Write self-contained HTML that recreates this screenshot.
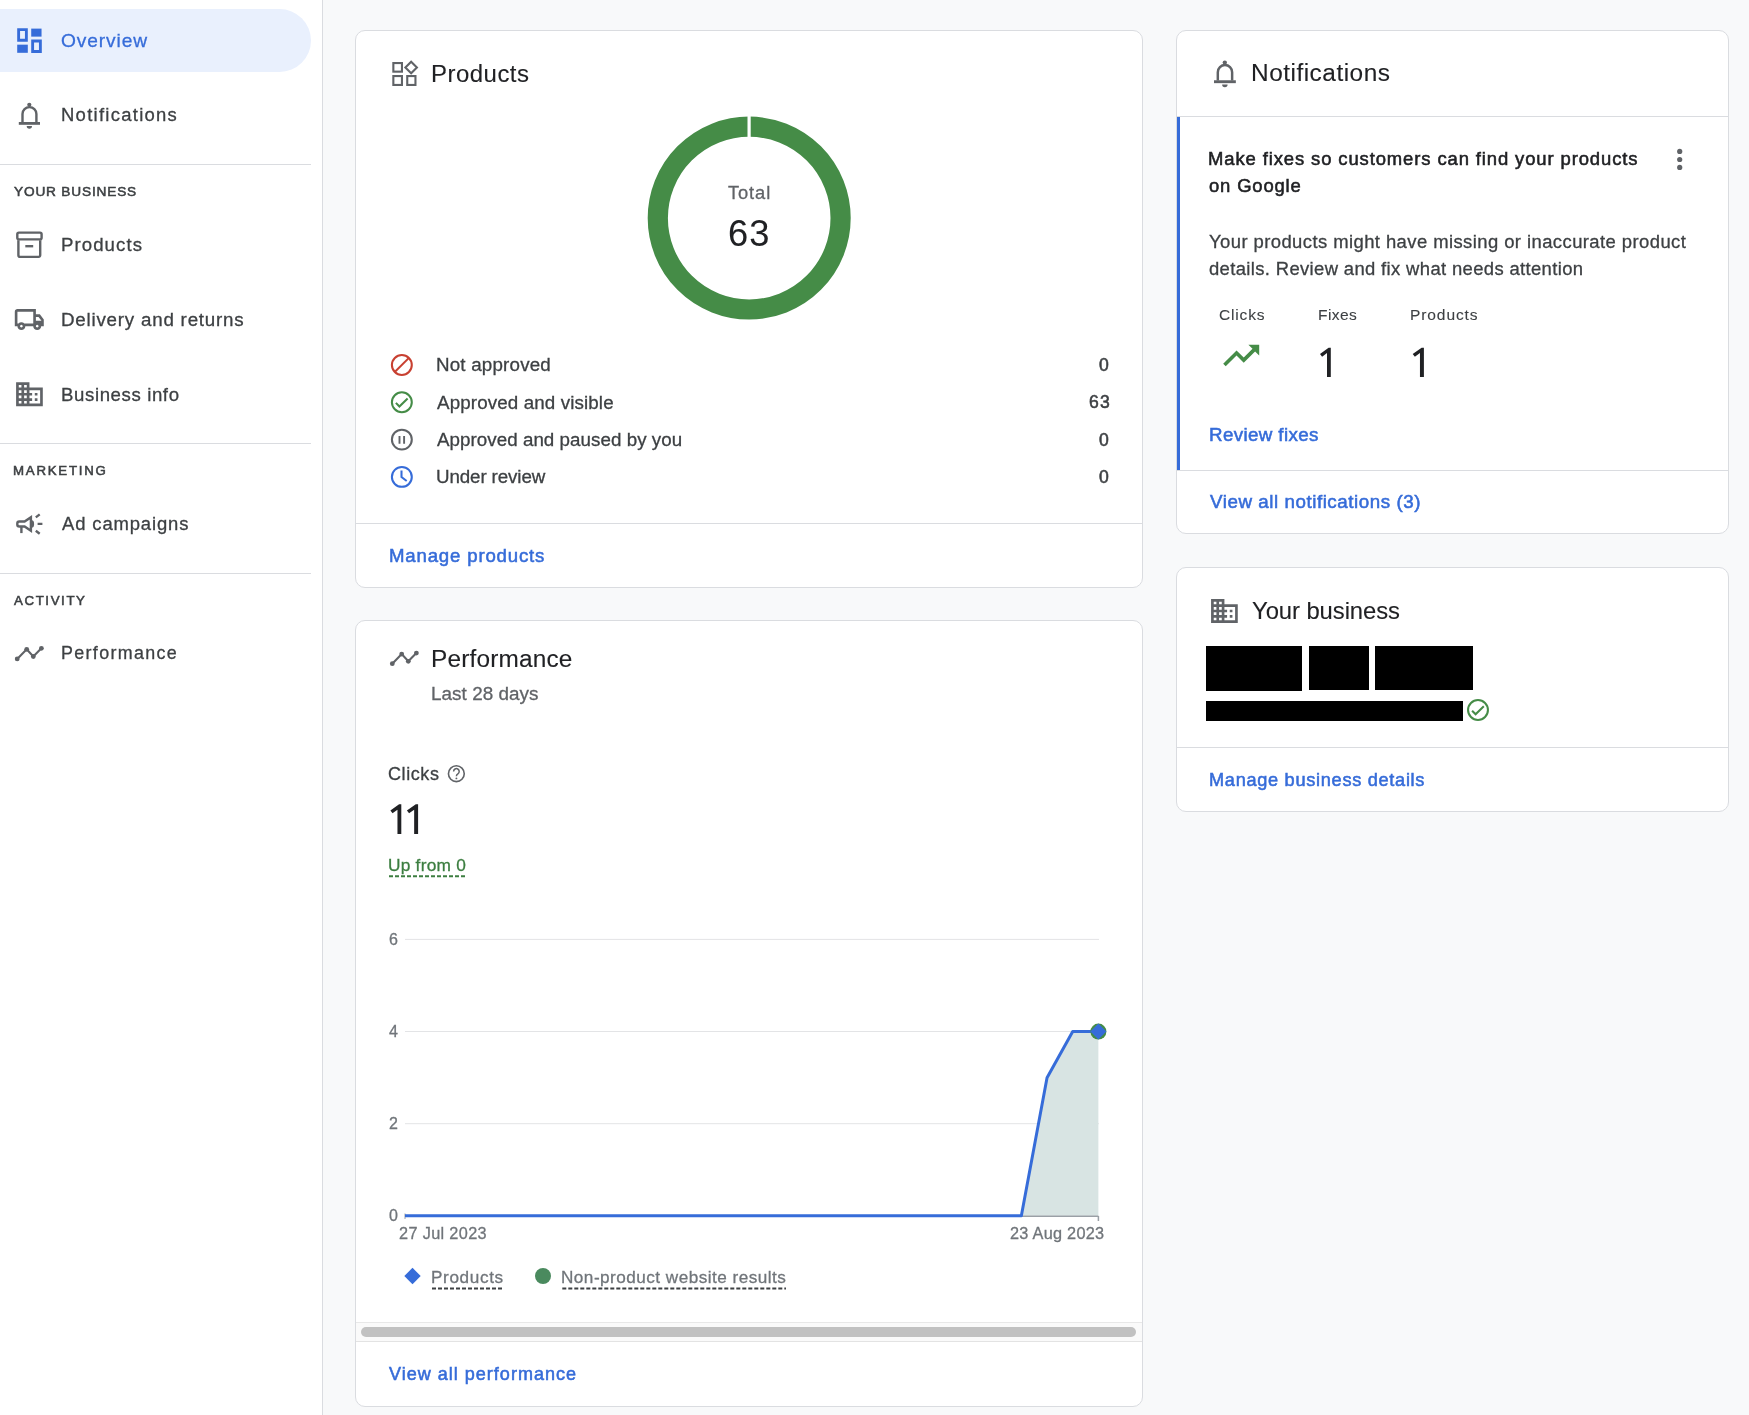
<!DOCTYPE html><html><head><meta charset="utf-8"><style>
html,body{margin:0;padding:0;}
body{width:1749px;height:1415px;overflow:hidden;background:#f8f9fa;position:relative;font-family:"Liberation Sans",sans-serif;}
.t{position:absolute;white-space:nowrap;will-change:transform;}
.abs{position:absolute;}
.card{position:absolute;background:#fff;border:1px solid #dadce0;border-radius:10px;box-sizing:border-box;}
.hr{position:absolute;height:1px;background:#dadce0;}
svg{position:absolute;left:0;top:0;overflow:visible;}
</style></head><body>

<div class="abs" style="left:0;top:0;width:322px;height:1415px;background:#fff;border-right:1px solid #dadce0;"></div>
<div class="abs" style="left:0;top:9px;width:311px;height:63px;background:#e9f0fd;border-radius:0 32px 32px 0;"></div>
<div class="hr" style="left:0;top:164px;width:311px;"></div>
<div class="hr" style="left:0;top:443px;width:311px;"></div>
<div class="hr" style="left:0;top:573px;width:311px;"></div>
<div class="card" style="left:355px;top:30px;width:788px;height:558px;"></div>
<div class="card" style="left:355px;top:620px;width:788px;height:787px;"></div>
<div class="card" style="left:1176px;top:30px;width:553px;height:504px;"></div>
<div class="card" style="left:1176px;top:567px;width:553px;height:245px;"></div>
<div class="hr" style="left:356px;top:523px;width:786px;"></div>
<div class="hr" style="left:1177px;top:116px;width:551px;"></div>
<div class="hr" style="left:1177px;top:470px;width:551px;"></div>
<div class="hr" style="left:1177px;top:747px;width:551px;"></div>
<div class="abs" style="left:1177px;top:117px;width:3px;height:353px;background:#366cd9;"></div>
<div class="abs" style="left:356px;top:1322px;width:786px;height:20px;background:#fafafa;border-top:1px solid #e8e8e8;border-bottom:1px solid #e3e3e3;box-sizing:border-box;"></div>
<div class="abs" style="left:361px;top:1327px;width:775px;height:10px;background:#c1c1c1;border-radius:5px;"></div>
<svg width="1749" height="1415" viewBox="0 0 1749 1415"><g transform="translate(17.2,28.2) scale(1.36)" fill="#366cd9"><path fill-rule="evenodd" d="M0 0h7.8v9.9H0z M2.1 2.1v5.7h3.6V2.1z"/><path d="M10.3 0.3h7.6v5.9h-7.6z"/><path d="M0 12.1h7.8v6H0z"/><path fill-rule="evenodd" d="M10.3 8.4h7.8v9.8h-7.8z M12.4 10.5v5.6h3.6v-5.6z"/></g><g transform="translate(18.8,103) scale(1.0)" fill="#606367" stroke="none"><circle cx="10.5" cy="1.8" r="2.1"/><path d="M2.5 19.2V11.1A8.15 8.15 0 0 1 18.8 11.1V19.2h-2.4V11.1A5.75 5.75 0 0 0 4.9 11.1V19.2z"/><rect x="0" y="19" width="21.2" height="2.8"/><path d="M7.9 23.1h5.3a2.65 2.65 0 0 1-5.3 0z"/></g><g transform="translate(1214,60.7) scale(1.03)" fill="#606367" stroke="none"><circle cx="10.5" cy="1.8" r="2.1"/><path d="M2.5 19.2V11.1A8.15 8.15 0 0 1 18.8 11.1V19.2h-2.4V11.1A5.75 5.75 0 0 0 4.9 11.1V19.2z"/><rect x="0" y="19" width="21.2" height="2.8"/><path d="M7.9 23.1h5.3a2.65 2.65 0 0 1-5.3 0z"/></g><g fill="none" stroke="#606367" stroke-width="2.4"><rect x="17.3" y="232.6" width="24.3" height="6.8" rx="1.6"/><path d="M18.4 240.2V255.3a1.6 1.6 0 0 0 1.6 1.6H38.6a1.6 1.6 0 0 0 1.6-1.6V240.2"/><path d="M25.3 246.2h7.9"/></g><g transform="translate(13.48,309) scale(0.03295) translate(0,800)" fill="#606367"><path d="M240-160q-50 0-85-35t-35-85H40v-440q0-33 23.5-56.5T120-800h560v160h120l120 160v200h-80q0 50-35 85t-85 35q-50 0-85-35t-35-85H360q0 50-35 85t-85 35Zm0-80q17 0 28.5-11.5T280-280q0-17-11.5-28.5T240-320q-17 0-28.5 11.5T200-280q0 17 11.5 28.5T240-240ZM120-360h32q17-18 39-29t49-11q27 0 49 11t39 29h272v-360H120v360Zm600 120q17 0 28.5-11.5T760-280q0-17-11.5-28.5T720-320q-17 0-28.5 11.5T680-280q0 17 11.5 28.5T720-240Zm-40-200h170l-90-120h-80v120ZM360-540Z"/></g><g transform="translate(13.43,378.2) scale(1.335)" fill="#606367"><path d="M12 7V3H2v18h20V7H12zM6 19H4v-2h2v2zm0-4H4v-2h2v2zm0-4H4V9h2v2zm0-4H4V5h2v2zm4 12H8v-2h2v2zm0-4H8v-2h2v2zm0-4H8V9h2v2zm0-4H8V5h2v2zm10 12h-8v-2h2v-2h-2v-2h2v-2h-2V9h8v10zm-2-8h-2v2h2v-2zm0 4h-2v2h2v-2z"/></g><g transform="translate(1208.4,595) scale(1.335)" fill="#606367"><path d="M12 7V3H2v18h20V7H12zM6 19H4v-2h2v2zm0-4H4v-2h2v2zm0-4H4V9h2v2zm0-4H4V5h2v2zm4 12H8v-2h2v2zm0-4H8v-2h2v2zm0-4H8V9h2v2zm0-4H8V5h2v2zm10 12h-8v-2h2v-2h-2v-2h2v-2h-2V9h8v10zm-2-8h-2v2h2v-2zm0 4h-2v2h2v-2z"/></g><g fill="none" stroke="#606367" stroke-width="2.4"><path d="M24.6 521.5H19.3a2.0 2.0 0 0 0-2.0 2.0v1.0a2.0 2.0 0 0 0 2.0 2.0H24.6l6.3 4.3V517.2z" stroke-linejoin="miter"/><path d="M21.4 527v6.1"/><path d="M35.8 517.4l3.9-3.0M37.6 523.9h4.8M35.8 530.7l3.9 3.0"/></g><path d="M31.9 520.3a2.2 3.65 0 0 1 0 7.3z" fill="#606367"/><g><path d="M17.2,658.9 L26.7,649.3 L33.3,656.5 L41.4,648.3" fill="none" stroke="#606367" stroke-width="2.1"/><circle cx="17.2" cy="658.9" r="2.4" fill="#606367"/><circle cx="26.7" cy="649.3" r="2.4" fill="#606367"/><circle cx="33.3" cy="656.5" r="2.4" fill="#606367"/><circle cx="41.4" cy="648.3" r="2.4" fill="#606367"/></g><g><path d="M392.3,663.7 L401.7,654.1 L408.3,661.3 L416.4,653.1" fill="none" stroke="#606367" stroke-width="2.1"/><circle cx="392.3" cy="663.7" r="2.4" fill="#606367"/><circle cx="401.7" cy="654.1" r="2.4" fill="#606367"/><circle cx="408.3" cy="661.3" r="2.4" fill="#606367"/><circle cx="416.4" cy="653.1" r="2.4" fill="#606367"/></g><g fill="none" stroke="#606367" stroke-width="2.1"><rect x="393.35" y="63.05" width="8.6" height="8.6"/><rect x="393.35" y="76.05" width="8.6" height="8.9"/><rect x="407.25" y="76.05" width="8.2" height="8.9"/><path d="M411.15 61.8L416.9 67.5L411.15 73.2L405.4 67.5z"/></g><circle cx="749.2" cy="218.1" r="91.4" fill="none" stroke="#458c47" stroke-width="20.200000000000003"/><rect x="747.5" y="115.6" width="3.2" height="22.200000000000003" fill="#fff"/><circle cx="401.85" cy="364.95" r="9.95" fill="none" stroke="#c84031" stroke-width="2.05"/><path d="M395.0 371.8L408.7 358.1" stroke="#c84031" stroke-width="2.05"/><circle cx="401.85" cy="402.2" r="9.95" fill="none" stroke="#458c47" stroke-width="2.05"/><path d="M395.9 402.9L399.4 406.5L407.6 398.4" fill="none" stroke="#458c47" stroke-width="2.05"/><circle cx="401.85" cy="439.6" r="9.95" fill="none" stroke="#606367" stroke-width="2.05"/><path d="M399.5 436v7.7M404.1 436v7.7" stroke="#606367" stroke-width="1.9"/><circle cx="401.85" cy="476.9" r="9.95" fill="none" stroke="#366cd9" stroke-width="2.05"/><path d="M401.5 470.5v6.6l5.2 3.9" fill="none" stroke="#366cd9" stroke-width="2.05"/><circle cx="456.35" cy="773.7" r="7.9" fill="none" stroke="#606367" stroke-width="1.6"/><path d="M453.6 771.4a2.8 2.8 0 1 1 4.3 2.4c-1.1.7-1.5 1.2-1.5 2.4" fill="none" stroke="#606367" stroke-width="1.5"/><circle cx="456.4" cy="778.4" r="0.95" fill="#606367"/><path d="M389 876.3H467" stroke="#3c7e40" stroke-width="2" stroke-dasharray="4 2"/><path d="M405 939.4H1099" stroke="#e3e4e6" stroke-width="1"/><path d="M405 1031.5H1099" stroke="#e3e4e6" stroke-width="1"/><path d="M405 1123.7H1099" stroke="#e3e4e6" stroke-width="1"/><path d="M1021.3555555555556,1215.8 L1047.037037037037,1077.65 L1072.7185185185185,1031.6 L1098.4,1031.6 L1098.4,1215.8z" fill="#d8e4e3"/><path d="M405 1216.3H1098.4 M1098.4 1216V1221" stroke="#9aa0a6" stroke-width="1.5" fill="none"/><path d="M405 1213.5V1219" stroke="#9aa0a6" stroke-width="1" fill="none"/><path d="M405,1215.8 L1021.3555555555556,1215.8 L1047.037037037037,1077.65 L1072.7185185185185,1031.6 L1098.4,1031.6" fill="none" stroke="#366cd9" stroke-width="3" stroke-linejoin="round"/><circle cx="1098.4" cy="1031.6" r="8" fill="#458c47"/><path d="M1098.4 1023.5999999999999l8 8l-8 8l-8-8z" fill="#366cd9"/><path d="M412.5 1267.8l8.2 8.2l-8.2 8.2l-8.2-8.2z" fill="#366cd9"/><circle cx="543" cy="1276" r="8" fill="#4a8a5e"/><path d="M432 1288.4H503" stroke="#3d4043" stroke-width="2" stroke-dasharray="4 2"/><path d="M562.3 1288.4H786" stroke="#3d4043" stroke-width="2" stroke-dasharray="4 2"/><circle cx="1679.7" cy="151.4" r="2.6" fill="#606367"/><circle cx="1679.7" cy="159.5" r="2.6" fill="#606367"/><circle cx="1679.7" cy="167.4" r="2.6" fill="#606367"/><g transform="translate(1219.6,333.9) scale(1.8)" fill="#458c47"><path d="M16 6l2.29 2.29-4.88 4.88-4-4L2 16.59 3.41 18l6-6 4 4 6.3-6.29L22 12V6z"/></g><g transform="translate(1320.0,347.8) scale(1.0000,1.0000)" fill="#202124"><path d="M10.8 0L8.6 0L0 6.1L2.1 8.9L7.0 5.3V29.1H10.8Z"/></g><g transform="translate(1412.7,347.8) scale(1.0370,1.0000)" fill="#202124"><path d="M10.8 0L8.6 0L0 6.1L2.1 8.9L7.0 5.3V29.1H10.8Z"/></g><g transform="translate(390.4,804.2) scale(1.0093,1.0275)" fill="#202124"><path d="M10.8 0L8.6 0L0 6.1L2.1 8.9L7.0 5.3V29.1H10.8Z"/></g><g transform="translate(406.9,804.2) scale(1.0370,1.0275)" fill="#202124"><path d="M10.8 0L8.6 0L0 6.1L2.1 8.9L7.0 5.3V29.1H10.8Z"/></g><rect x="1206" y="646" width="96" height="45" fill="#000"/><rect x="1309" y="646" width="60" height="44" fill="#000"/><rect x="1375" y="646" width="98" height="44" fill="#000"/><rect x="1206" y="701" width="257" height="20" fill="#000"/><circle cx="1478" cy="710" r="9.95" fill="none" stroke="#458c47" stroke-width="2.05"/><path d="M1472.1 710.7L1475.6 714.3L1483.8 706.2" fill="none" stroke="#458c47" stroke-width="2.05"/></svg>
<div class="t" style="left:61.3px;top:31px;font-size:19.186px;line-height:19.186px;letter-spacing:0.886px;color:#366cd9;-webkit-text-stroke:0.3px #366cd9;">Overview</div>
<div class="t" style="left:61.3px;top:106px;font-size:18.46px;line-height:18.46px;letter-spacing:1.283px;color:#3d4043;-webkit-text-stroke:0.3px #3d4043;">Notifications</div>
<div class="t" style="left:13.7px;top:185px;font-size:13.67px;line-height:13.67px;letter-spacing:0.825px;color:#3d4043;-webkit-text-stroke:0.55px #3d4043;">YOUR BUSINESS</div>
<div class="t" style="left:61.4px;top:236px;font-size:18.605px;line-height:18.605px;letter-spacing:1.086px;color:#3d4043;-webkit-text-stroke:0.3px #3d4043;">Products</div>
<div class="t" style="left:61.4px;top:311px;font-size:18.75px;line-height:18.75px;letter-spacing:0.784px;color:#3d4043;-webkit-text-stroke:0.3px #3d4043;">Delivery and returns</div>
<div class="t" style="left:61.4px;top:386px;font-size:18.605px;line-height:18.605px;letter-spacing:0.617px;color:#3d4043;-webkit-text-stroke:0.3px #3d4043;">Business info</div>
<div class="t" style="left:12.7px;top:464px;font-size:13.256px;line-height:13.256px;letter-spacing:1.762px;color:#3d4043;-webkit-text-stroke:0.55px #3d4043;">MARKETING</div>
<div class="t" style="left:62.4px;top:515px;font-size:18.46px;line-height:18.46px;letter-spacing:0.873px;color:#3d4043;-webkit-text-stroke:0.3px #3d4043;">Ad campaigns</div>
<div class="t" style="left:13.7px;top:594px;font-size:13.256px;line-height:13.256px;letter-spacing:1.614px;color:#3d4043;-webkit-text-stroke:0.55px #3d4043;">ACTIVITY</div>
<div class="t" style="left:61.4px;top:645px;font-size:17.878px;line-height:17.878px;letter-spacing:1.35px;color:#3d4043;-webkit-text-stroke:0.3px #3d4043;">Performance</div>
<div class="t" style="left:430.8px;top:62px;font-size:23.983px;line-height:23.983px;letter-spacing:0.486px;color:#202124;-webkit-text-stroke:0.1px #202124;">Products</div>
<div class="t" style="left:728.4px;top:184px;font-size:18.314px;line-height:18.314px;letter-spacing:0.9px;color:#606367;-webkit-text-stroke:0.3px #606367;">Total</div>
<div class="t" style="left:728.0px;top:216px;font-size:36.286px;line-height:36.286px;letter-spacing:1.2px;color:#202124;-webkit-text-stroke:0.05px #202124;">63</div>
<div class="t" style="left:436.3px;top:356px;font-size:18.75px;line-height:18.75px;letter-spacing:0.2px;color:#3d4043;-webkit-text-stroke:0.3px #3d4043;">Not approved</div>
<div class="t" style="left:437.3px;top:394px;font-size:18.75px;line-height:18.75px;letter-spacing:0.132px;color:#3d4043;-webkit-text-stroke:0.3px #3d4043;">Approved and visible</div>
<div class="t" style="left:437.3px;top:431px;font-size:18.75px;line-height:18.75px;letter-spacing:0.048px;color:#3d4043;-webkit-text-stroke:0.3px #3d4043;">Approved and paused by you</div>
<div class="t" style="left:436.3px;top:468px;font-size:18.75px;line-height:18.75px;letter-spacing:-0.109px;color:#3d4043;-webkit-text-stroke:0.3px #3d4043;">Under review</div>
<div class="t" style="left:388.5px;top:547px;font-size:18.605px;line-height:18.605px;letter-spacing:0.836px;color:#366cd9;-webkit-text-stroke:0.55px #366cd9;">Manage products</div>
<div class="t" style="left:430.6px;top:647px;font-size:24.419px;line-height:24.419px;letter-spacing:0.16px;color:#202124;-webkit-text-stroke:0.1px #202124;">Performance</div>
<div class="t" style="left:431.2px;top:685px;font-size:18.896px;line-height:18.896px;letter-spacing:0.045px;color:#606367;-webkit-text-stroke:0.3px #606367;">Last 28 days</div>
<div class="t" style="left:388.4px;top:765px;font-size:18.024px;line-height:18.024px;letter-spacing:0.58px;color:#3d4043;-webkit-text-stroke:0.3px #3d4043;">Clicks</div>
<div class="t" style="left:388.1px;top:857px;font-size:17.297px;line-height:17.297px;letter-spacing:0.237px;color:#3c7e40;-webkit-text-stroke:0.3px #3c7e40;">Up from 0</div>
<div class="t" style="left:398.7px;top:1225px;font-size:16.279px;line-height:16.279px;letter-spacing:0.35px;color:#70757a;-webkit-text-stroke:0.3px #70757a;">27 Jul 2023</div>
<div class="t" style="left:1010.3px;top:1225px;font-size:16.279px;line-height:16.279px;letter-spacing:0.27px;color:#70757a;-webkit-text-stroke:0.3px #70757a;">23 Aug 2023</div>
<div class="t" style="left:431.0px;top:1269px;font-size:17.151px;line-height:17.151px;letter-spacing:0.643px;color:#70757a;-webkit-text-stroke:0.3px #70757a;">Products</div>
<div class="t" style="left:561.3px;top:1269px;font-size:17.151px;line-height:17.151px;letter-spacing:0.477px;color:#70757a;-webkit-text-stroke:0.3px #70757a;">Non-product website results</div>
<div class="t" style="left:389.2px;top:1365px;font-size:18.024px;line-height:18.024px;letter-spacing:1.005px;color:#366cd9;-webkit-text-stroke:0.55px #366cd9;">View all performance</div>
<div class="t" style="left:1250.5px;top:61px;font-size:24.419px;line-height:24.419px;letter-spacing:0.5px;color:#202124;-webkit-text-stroke:0.1px #202124;">Notifications</div>
<div class="t" style="left:1208.3px;top:150px;font-size:18.467px;line-height:18.467px;letter-spacing:0.891px;color:#202124;-webkit-text-stroke:0.55px #202124;">Make fixes so customers can find your products</div>
<div class="t" style="left:1209.3px;top:177px;font-size:18.467px;line-height:18.467px;letter-spacing:0.838px;color:#202124;-webkit-text-stroke:0.55px #202124;">on Google</div>
<div class="t" style="left:1209.3px;top:233px;font-size:18.46px;line-height:18.46px;letter-spacing:0.425px;color:#3d4043;-webkit-text-stroke:0.3px #3d4043;">Your products might have missing or inaccurate product</div>
<div class="t" style="left:1209.3px;top:260px;font-size:18.46px;line-height:18.46px;letter-spacing:0.356px;color:#3d4043;-webkit-text-stroke:0.3px #3d4043;">details. Review and fix what needs attention</div>
<div class="t" style="left:1218.7px;top:307px;font-size:15.553px;line-height:15.553px;letter-spacing:0.82px;color:#3d4043;-webkit-text-stroke:0.1px #3d4043;">Clicks</div>
<div class="t" style="left:1317.7px;top:307px;font-size:15.553px;line-height:15.553px;letter-spacing:0.425px;color:#3d4043;-webkit-text-stroke:0.1px #3d4043;">Fixes</div>
<div class="t" style="left:1410.3px;top:307px;font-size:15.553px;line-height:15.553px;letter-spacing:0.886px;color:#3d4043;-webkit-text-stroke:0.1px #3d4043;">Products</div>
<div class="t" style="left:1208.8px;top:426px;font-size:18.75px;line-height:18.75px;letter-spacing:0.373px;color:#366cd9;-webkit-text-stroke:0.55px #366cd9;">Review fixes</div>
<div class="t" style="left:1209.8px;top:493px;font-size:18.75px;line-height:18.75px;letter-spacing:0.552px;color:#366cd9;-webkit-text-stroke:0.55px #366cd9;">View all notifications (3)</div>
<div class="t" style="left:1252.0px;top:599px;font-size:23.838px;line-height:23.838px;letter-spacing:-0.067px;color:#202124;-webkit-text-stroke:0.1px #202124;">Your business</div>
<div class="t" style="left:1208.6px;top:771px;font-size:18.169px;line-height:18.169px;letter-spacing:0.709px;color:#366cd9;-webkit-text-stroke:0.55px #366cd9;">Manage business details</div>
<div class="t" style="left:1099.1px;top:357px;font-size:17.571px;line-height:17.571px;letter-spacing:0px;color:#3d4043;-webkit-text-stroke:0.55px #3d4043;">0</div>
<div class="t" style="left:1088.5px;top:394px;font-size:17.571px;line-height:17.571px;letter-spacing:1.2px;color:#3d4043;-webkit-text-stroke:0.55px #3d4043;">63</div>
<div class="t" style="left:1099.1px;top:432px;font-size:17.571px;line-height:17.571px;letter-spacing:0px;color:#3d4043;-webkit-text-stroke:0.55px #3d4043;">0</div>
<div class="t" style="left:1099.1px;top:469px;font-size:17.571px;line-height:17.571px;letter-spacing:0px;color:#3d4043;-webkit-text-stroke:0.55px #3d4043;">0</div>
<div class="t" style="left:389.1px;top:932px;font-size:16.0px;line-height:16.0px;letter-spacing:0px;color:#70757a;-webkit-text-stroke:0.3px #70757a;">6</div>
<div class="t" style="left:389.1px;top:1024px;font-size:16.0px;line-height:16.0px;letter-spacing:0px;color:#70757a;-webkit-text-stroke:0.3px #70757a;">4</div>
<div class="t" style="left:389.1px;top:1116px;font-size:16.0px;line-height:16.0px;letter-spacing:0px;color:#70757a;-webkit-text-stroke:0.3px #70757a;">2</div>
<div class="t" style="left:389.1px;top:1208px;font-size:16.0px;line-height:16.0px;letter-spacing:0px;color:#70757a;-webkit-text-stroke:0.3px #70757a;">0</div>
</body></html>
